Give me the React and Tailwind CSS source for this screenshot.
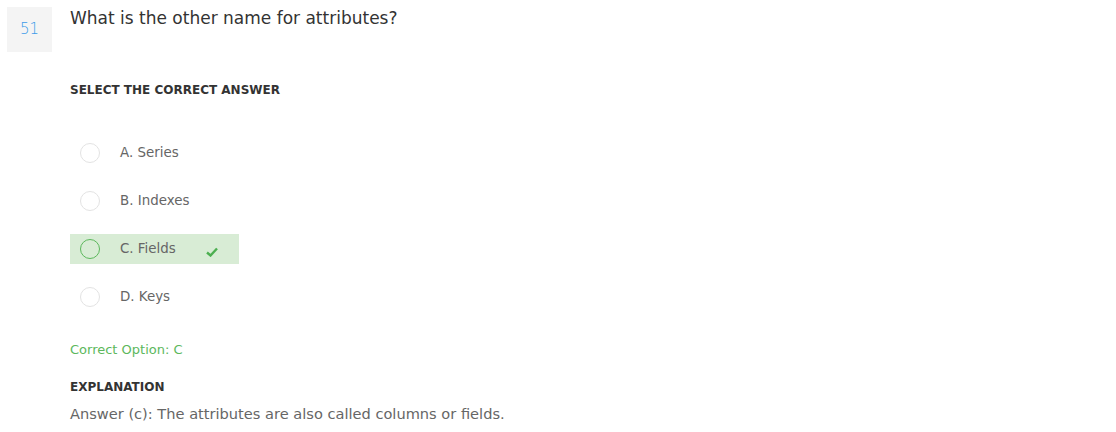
import React from "react";

const options = [
  { label: "A. Series", correct: false },
  { label: "B. Indexes", correct: false },
  { label: "C. Fields", correct: true },
  { label: "D. Keys", correct: false },
];

export default function App() {
  return (
    <div className="w-[1116px] h-[432px] bg-white relative" style={{ fontFamily: "'DejaVu Sans', sans-serif" }}>
      <div className="flex pt-[7px] pl-[7px]">
        <div className="w-[45px] h-[45px] bg-[#f4f4f4] flex items-center justify-center text-[15px] text-[#3d9be9] font-light">
          51
        </div>
        <div className="ml-[18px] pt-[1px] text-[17px] text-[#333] leading-[20px]">
          What is the other name for attributes?
        </div>
      </div>
      <div className="pl-[70px]">
        <div className="mt-[30px] text-[12px] font-bold text-[#333] leading-[16px]">SELECT THE CORRECT ANSWER</div>
        <div className="mt-[40px] flex flex-col gap-[18px]">
          {options.map((o) => (
            <div
              key={o.label}
              className={
                "w-[169px] h-[30px] flex items-center pl-[10px] " + (o.correct ? "bg-[#d8ecd5]" : "")
              }
            >
              <div
                className={
                  "w-[20px] h-[20px] rounded-full border " +
                  (o.correct ? "border-[#5cb85c]" : "border-[#e3e3e3]")
                }
              />
              <span className="ml-[20px] text-[13.4px] text-[#666]">{o.label}</span>
              {o.correct && (
                <svg className="ml-[30px] mt-[6px]" width="12" height="10" viewBox="0 0 12 10">
                  <path d="M1 5.5 L4.5 8.5 L11 1.5" fill="none" stroke="#4caf50" strokeWidth="2.4" />
                </svg>
              )}
            </div>
          ))}
        </div>
        <div className="mt-[29px] text-[13px] text-[#5cb85c] leading-[18px]">Correct Option: C</div>
        <div className="mt-[20px] text-[12px] font-bold text-[#333] leading-[16px]">EXPLANATION</div>
        <div className="mt-[8px] text-[14.6px] text-[#666] leading-[22px]">Answer (c): The attributes are also called columns or fields.</div>
      </div>
    </div>
  );
}
